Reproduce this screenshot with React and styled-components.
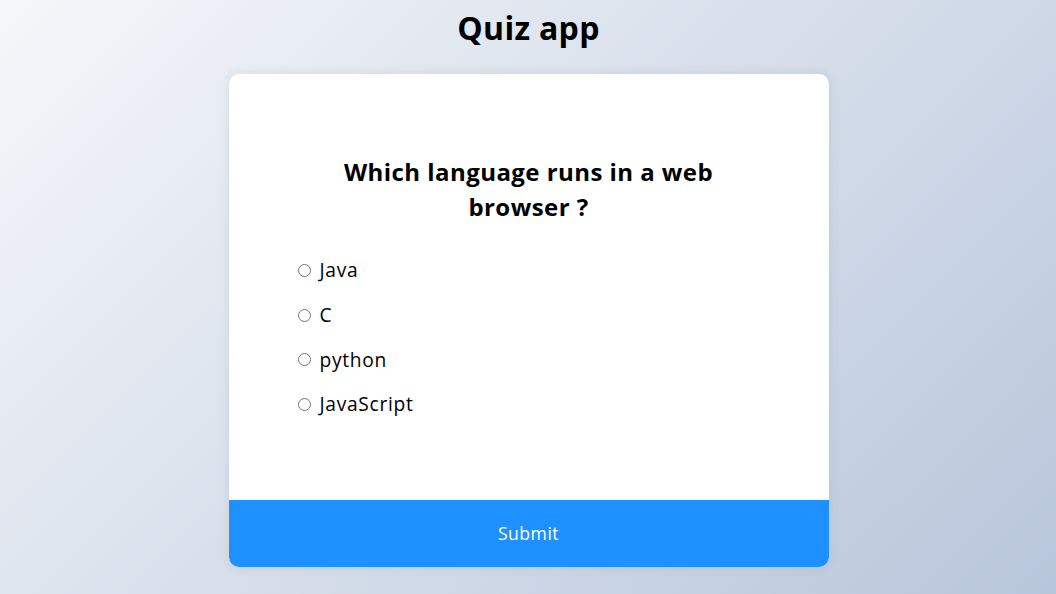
import React from "react";
import styled, { createGlobalStyle } from "styled-components";

const GlobalStyle = createGlobalStyle`
  * {
    box-sizing: border-box;
  }
  html, body {
    margin: 0;
    padding: 0;
  }
  body {
    font-family: "Open Sans", "Noto Sans", sans-serif;
    background-color: #b8c6db;
    background-image: linear-gradient(315deg, #b8c6db 0%, #f5f7fa 100%);
    min-height: 100vh;
  }
`;

const Page = styled.div`
  display: flex;
  flex-direction: column;
  align-items: center;
  min-height: 100vh;
  padding-left: 1px;
`;

const Title = styled.h1`
  margin: 4px 0 22px;
  font-size: 32px;
  line-height: 48px;
  font-weight: 700;
  letter-spacing: 0.3px;
  color: #000;
`;

const QuizCard = styled.div`
  width: 600px;
  max-width: 95vw;
  background-color: #fff;
  border-radius: 10px;
  box-shadow: 0 0 10px 2px rgba(100, 100, 100, 0.1);
  overflow: hidden;
`;

const QuizHeader = styled.div`
  padding: 64px 64px 64.5px;
`;

const Question = styled.h2`
  margin: 0;
  padding: 16px;
  text-align: center;
  font-size: 24px;
  line-height: 35px;
  font-weight: 700;
  letter-spacing: 0.45px;
  color: #000;
`;

const AnswerList = styled.ul`
  list-style: none;
  margin: 0;
  padding: 0;
`;

const AnswerItem = styled.li`
  display: flex;
  align-items: center;
  font-size: 19.2px;
  line-height: 28.8px;
  margin: 16px 0;
  letter-spacing: 0.7px;
  color: #000;
`;

const Radio = styled.input`
  width: 13px;
  height: 13px;
  margin: 0 9px 0 5px;
`;

const SubmitButton = styled.button`
  display: block;
  width: 100%;
  border: none;
  background-color: #1e90ff;
  color: #fff;
  font-family: inherit;
  font-size: 17.6px;
  line-height: 26px;
  letter-spacing: 0.5px;
  padding: 20.8px;
  cursor: pointer;
`;

const answers = [
  { id: "a", text: "Java" },
  { id: "b", text: "C" },
  { id: "c", text: "python" },
  { id: "d", text: "JavaScript" },
];

export default function App() {
  return (
    <>
      <GlobalStyle />
      <Page>
        <Title>Quiz app</Title>
        <QuizCard>
          <QuizHeader>
            <Question>
              Which language runs in a web
              <br />
              browser ?
            </Question>
            <AnswerList>
              {answers.map((a) => (
                <AnswerItem key={a.id}>
                  <Radio type="radio" name="answer" id={a.id} />
                  <label htmlFor={a.id}>{a.text}</label>
                </AnswerItem>
              ))}
            </AnswerList>
          </QuizHeader>
          <SubmitButton>Submit</SubmitButton>
        </QuizCard>
      </Page>
    </>
  );
}
